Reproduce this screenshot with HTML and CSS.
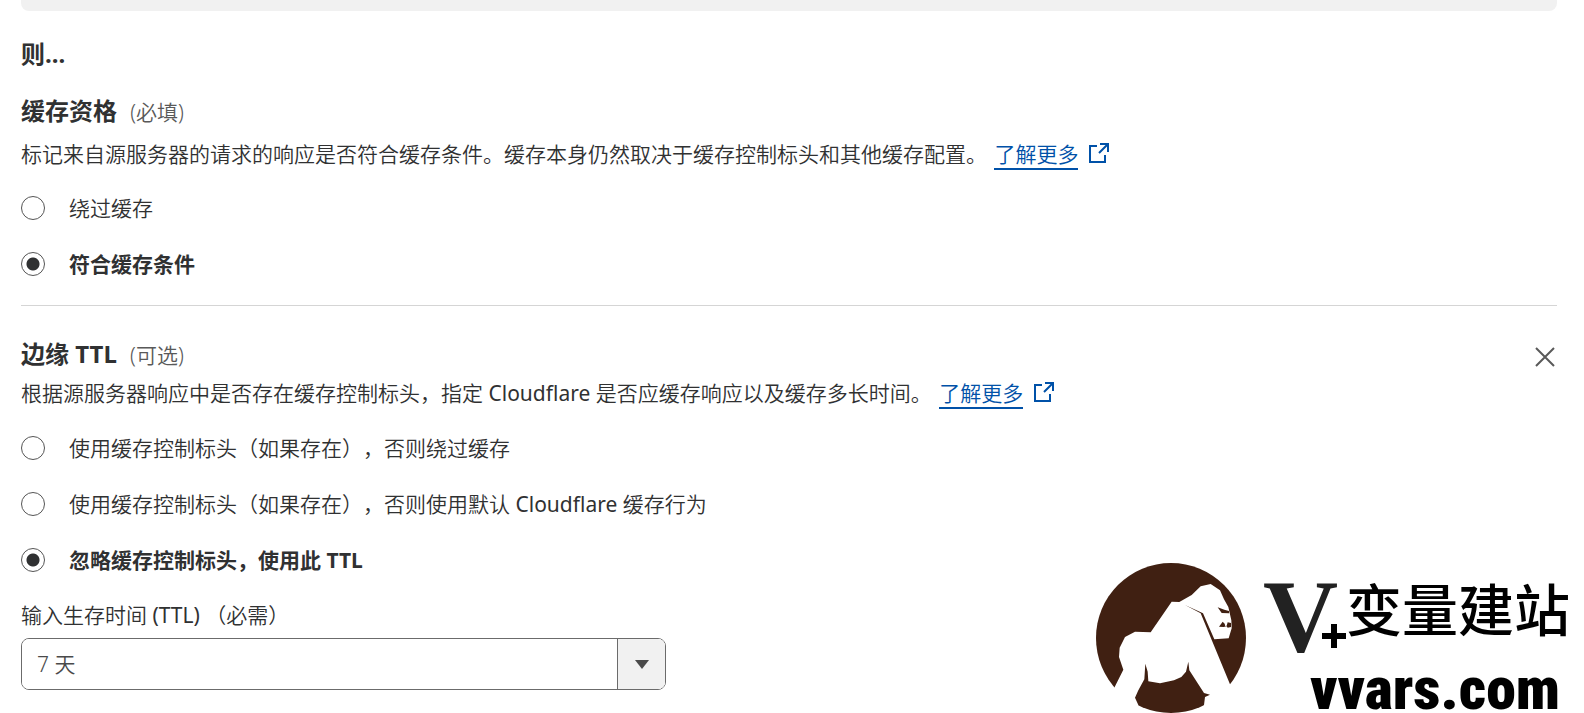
FILE: index.html
```html
<!DOCTYPE html>
<html lang="zh-CN">
<head>
<meta charset="utf-8">
<meta name="viewport" content="width=device-width, initial-scale=1">
<title>缓存规则</title>
<link rel="stylesheet" href="styles.css">
</head>
<body>
<main class="page">
  <div class="panel-edge"></div>
  <h2 class="title then">则...</h2>

  <section class="setting">
    <h3 class="title">缓存资格 <span class="hint">(必填)</span></h3>
    <p class="description">标记来自源服务器的请求的响应是否符合缓存条件。缓存本身仍然取决于缓存控制标头和其他缓存配置。
      <a class="more" href="#eligibility"><span class="more-text">了解更多</span><svg class="external" viewBox="0 0 22 22" aria-hidden="true"><path d="M9 4H2v16h15v-7M12 2h8v8M20 2l-9 9"/></svg></a></p>
    <div class="options">
      <label class="option"><input class="radio" type="radio" name="eligibility"><span>绕过缓存</span></label>
      <label class="option"><input class="radio" type="radio" name="eligibility" checked><span>符合缓存条件</span></label>
    </div>
  </section>

  <section class="setting divided">
    <div class="heading-row">
      <h3 class="title">边缘 TTL <span class="hint">(可选)</span></h3>
      <button class="close" type="button" aria-label="关闭"><svg class="close-icon" viewBox="0 0 20 20" aria-hidden="true"><path d="M1 1l18 18M19 1L1 19"/></svg></button>
    </div>
    <p class="description compact">根据源服务器响应中是否存在缓存控制标头，指定<span class="latin"> Cloudflare </span>是否应缓存响应以及缓存多长时间。
      <a class="more" href="#edge-ttl"><span class="more-text">了解更多</span><svg class="external" viewBox="0 0 22 22" aria-hidden="true"><path d="M9 4H2v16h15v-7M12 2h8v8M20 2l-9 9"/></svg></a></p>
    <div class="options">
      <label class="option"><input class="radio" type="radio" name="ttl"><span>使用缓存控制标头（如果存在），否则绕过缓存</span></label>
      <label class="option"><input class="radio" type="radio" name="ttl"><span>使用缓存控制标头（如果存在），否则使用默认<span class="latin"> Cloudflare </span>缓存行为</span></label>
      <label class="option"><input class="radio" type="radio" name="ttl" checked><span>忽略缓存控制标头，使用此 TTL</span></label>
    </div>
    <label class="field-label" for="duration">输入生存时间<span class="latin"> (TTL) </span>（必需）</label>
    <div class="select-box">
      <select class="select" id="duration"><option>7 天</option></select>
      <span class="select-arrow"></span>
    </div>
  </section>

  <aside class="brand">
    <svg class="brand-mark" viewBox="48 36 450 450" aria-hidden="true">
      <circle cx="273" cy="261" r="225" fill="#402012"/>
      <path fill="#fff" d="M104 408L130 356L117 318L119 290L135 258L165 242L212 244L275 152L298 153L335 132L362 106L392 99L420 118L432 145L445 168L454 208L455 232L446 262L403 265L369 187L315 162L362 187L450 400L480 500L360 500L372 462L375 438L390 431L372 426L328 358L325 332L318 362L304 378L282 388L240 397L205 391L203 362L196 338L193 385L175 418L165 440L175 462L165 500L80 500Z"/>
      <path fill="#402012" d="M413 169L433 176L447 180V187L425 186ZM417 227L428 212L434 218L436 226L440 224L443 214L453 216V228L443 230L440 226L431 228Z"/>
    </svg>
    <div class="brand-text">
      <div class="brand-line"><span class="brand-v">V</span><svg class="brand-plus" viewBox="0 0 24 24" aria-hidden="true"><path d="M12 0v24M0 12h24"/></svg><span class="brand-name">变量建站</span></div>
      <div class="brand-domain">vvars.com</div>
    </div>
  </aside>
</main>
</body>
</html>
```

FILE: styles.css
```css
* { box-sizing: border-box; }

body {
  margin: 0;
  background: #fff;
  color: #303132;
  font: 350 21px/32px "Noto Sans", "Noto Sans CJK SC", sans-serif;
  text-spacing-trim: space-all;
}

.page {
  position: relative;
  min-height: 100vh;
  padding: 0 27px 22px 21px;
  overflow: hidden;
}

.panel-edge {
  height: 11px;
  border-radius: 0 0 8px 8px;
  background: #f1f1f1;
}

.title {
  margin: 0;
  font-size: 24px;
  line-height: 36px;
  font-weight: 700;
}

.then { margin: 25px 0 21px; }

.hint {
  margin-left: 7px;
  color: #595959;
  font-size: 21px;
  font-weight: 350;
}

.latin { font-weight: 400; }

.description { margin: 8px 0 22px; }
.compact { margin: 4px 0 23px; }

.more {
  margin-left: 2px;
  color: #0051a8;
  text-decoration: none;
}

.more-text {
  border-bottom: 2px solid #0051a8;
}

.external {
  width: 22px;
  height: 22px;
  margin-left: 10px;
  vertical-align: -2px;
  fill: none;
  stroke: currentColor;
  stroke-width: 2;
}

.options {
  display: flex;
  flex-direction: column;
  gap: 24px;
}

.option {
  display: flex;
  align-items: center;
  gap: 24px;
}

.option:has(:checked) { font-weight: 700; }

.radio {
  appearance: none;
  flex: none;
  width: 24px;
  height: 24px;
  margin: 0;
  border: 1px solid #555;
  border-radius: 50%;
  background: #fff;
}

.radio:checked { background: radial-gradient(circle, #303132 6px, #fff 7px); }

.divided {
  margin-top: 25px;
  padding-top: 30px;
  border-top: 1px solid #d5d5d5;
}

.heading-row {
  display: flex;
  align-items: center;
  justify-content: space-between;
}

.close {
  display: flex;
  padding: 4px 2px 0;
  border: 0;
  background: none;
  color: #595959;
}

.close-icon {
  width: 20px;
  height: 20px;
  stroke: currentColor;
  stroke-width: 2;
}

.field-label {
  display: block;
  margin: 23px 0 7px;
}

.select-box {
  display: grid;
  grid-template-columns: 1fr 48px;
  max-width: 645px;
  height: 52px;
  border: 1px solid #6b6b6b;
  border-radius: 8px;
  overflow: hidden;
}

.select {
  grid-area: 1 / 1 / 2 / 3;
  appearance: none;
  width: 100%;
  padding: 0 15px;
  border: 0;
  background: #fff;
  color: #4a4a4a;
  font: inherit;
}

.select-arrow {
  grid-area: 1 / 2 / 2 / 3;
  display: grid;
  place-items: center;
  border-left: 1px solid #6b6b6b;
  background: #f1f1f1;
  pointer-events: none;
}

.select-arrow::before {
  content: "";
  border: 7px solid transparent;
  border-top: 9px solid #4a4a4a;
  border-bottom: 0;
}

.brand {
  position: absolute;
  right: 14px;
  bottom: 0;
  display: flex;
  align-items: flex-end;
  gap: 17px;
  color: #000;
}

.brand-mark {
  width: 150px;
  height: 150px;
}

.brand-line {
  display: flex;
  align-items: center;
  height: 92px;
}

.brand-v {
  padding-top: 18px;
  color: #222;
  font: 700 104px/92px "Liberation Serif", serif;
}

.brand-plus {
  align-self: flex-end;
  width: 24px;
  height: 24px;
  margin: 0 0 5px -16px;
  stroke: currentColor;
  stroke-width: 6;
}

.brand-name {
  font: 500 56px/80px "Noto Sans CJK SC", sans-serif;
}

.brand-domain {
  height: 60px;
  padding-left: 47px;
  font: 900 60px/72px "Roboto Condensed", "Noto Sans CJK SC", sans-serif;
}
```
